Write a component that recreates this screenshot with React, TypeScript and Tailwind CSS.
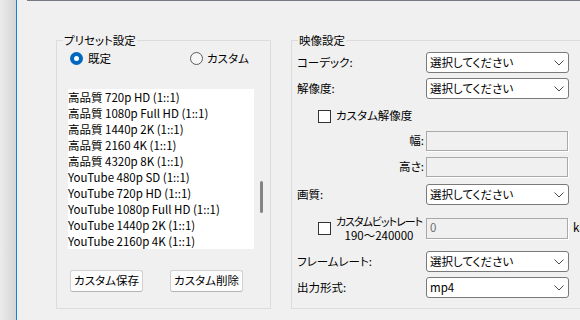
const presets = [
  "高品質 720p HD (1::1)",
  "高品質 1080p Full HD (1::1)",
  "高品質 1440p 2K (1::1)",
  "高品質 2160 4K (1::1)",
  "高品質 4320p 8K (1::1)",
  "YouTube 480p SD (1::1)",
  "YouTube 720p HD (1::1)",
  "YouTube 1080p Full HD (1::1)",
  "YouTube 1440p 2K (1::1)",
  "YouTube 2160p 4K (1::1)",
];

function Chevron() {
  return (
    <svg width="10" height="6" viewBox="0 0 10 6" className="mr-[4px] shrink-0">
      <polyline points="0.5,0.5 5,5 9.5,0.5" fill="none" stroke="#4a4a4a" strokeWidth="1" />
    </svg>
  );
}

function Select({ value }: { value: string }) {
  return (
    <div className="flex h-[21px] w-[143px] items-center justify-between rounded-[3px] border border-[#7a7a7a] bg-white pl-[3px]">
      <span>{value}</span>
      <Chevron />
    </div>
  );
}

function Checkbox() {
  return <div className="size-[13px] shrink-0 border border-[#333333] bg-white" />;
}

function Radio({ checked }: { checked?: boolean }) {
  if (checked) {
    return (
      <div className="flex size-[13px] items-center justify-center rounded-full bg-[#0067c0]">
        <div className="size-[5px] rounded-full bg-white" />
      </div>
    );
  }
  return <div className="size-[13px] rounded-full border border-[#5c5c5c] bg-[#f6f6f6]" />;
}

function Group({ title, className, children }: { title: string; className: string; children: React.ReactNode }) {
  return (
    <div className={"relative shrink-0 border border-[#dcdcdc] " + className}>
      <span className="absolute left-[6px] top-[-9px] bg-[#f0f0f0] px-px leading-[16px]">{title}</span>
      {children}
    </div>
  );
}

function Row({ label, value, className }: { label: string; value: string; className: string }) {
  return (
    <div className={"flex h-[21px] items-center " + className}>
      <span className="w-[134px] pl-[5px]">{label}</span>
      <Select value={value} />
    </div>
  );
}

function SizeRow({ label, className }: { label: string; className: string }) {
  return (
    <div className={"flex h-[20px] items-center " + className}>
      <span className="w-[134px] pr-[2px] text-right">{label}</span>
      <div className="h-[20px] w-[142px] border border-[#a9a9a9] bg-[#f0f0f0] shadow-[1px_1px_0_#ffffff]" />
    </div>
  );
}

export default function App() {
  return (
    <div className="flex h-[320px] w-[580px] overflow-hidden bg-[#f0f0f0] text-[11.5px] text-black [font-family:'Noto_Sans_CJK_JP',sans-serif] [font-feature-settings:'palt']">
      <div className="w-[16px] shrink-0 bg-gradient-to-r from-[#ececec] to-[#d5d5d5]" />
      <div className="w-px shrink-0 bg-[#1a7fd4]" />
      <div className="flex min-w-0 flex-1 flex-col">
        <div className="ml-[10px] h-px shrink-0 bg-[#767b83]" />
        <div className="mt-[39px] flex gap-[20px] pl-[39px]">
          <Group title="プリセット設定" className="w-[215px] pb-[11px]">
            <div className="ml-[13px] mt-[11px] flex h-[13px] items-center">
              <Radio checked />
              <span className="ml-[5px] w-[102px]">既定</span>
              <Radio />
              <span className="ml-[4px]">カスタム</span>
            </div>
            <div className="ml-[11px] mt-[24px] flex">
              <div className="h-[160px] w-[186px] bg-white">
                {presets.map((p) => (
                  <div key={p} className="h-[16px] whitespace-nowrap leading-[16px]">{p}</div>
                ))}
              </div>
              <div className="w-[13px] pl-[6px] pt-[92px]">
                <div className="h-[32px] w-[2.5px] rounded-full bg-[#858585]" />
              </div>
            </div>
            <div className="ml-[13px] mt-[21px] flex gap-[27px]">
              <button className="h-[22px] w-[73px] rounded-[3px] border border-[#d0d0d0] border-b-[#b5b5b5] bg-[#fdfdfd]">カスタム保存</button>
              <button className="h-[22px] w-[73px] rounded-[3px] border border-[#d0d0d0] border-b-[#b5b5b5] bg-[#fdfdfd]">カスタム削除</button>
            </div>
          </Group>
          <Group title="映像設定" className="w-[320px] pb-[10px] pt-[11px]">
            <Row label="コーデック:" value="選択してください" className="" />
            <Row label="解像度:" value="選択してください" className="mt-[5px]" />
            <div className="ml-[26px] mt-[7px] flex h-[20px] items-center">
              <Checkbox />
              <span className="ml-[5px]">カスタム解像度</span>
            </div>
            <SizeRow label="幅:" className="mt-[5px]" />
            <SizeRow label="高さ:" className="mt-[6px]" />
            <Row label="画質:" value="選択してください" className="mt-[7px]" />
            <div className="mt-[8px] flex h-[30px] items-center">
              <div className="ml-[26px]">
                <Checkbox />
              </div>
              <div className="ml-[5px] flex w-[86px] flex-col items-center whitespace-nowrap leading-[14px]">
                <div className="text-[11px] tracking-[-1px]">カスタムビットレート</div>
                <div>190〜240000</div>
              </div>
              <div className="ml-[4px] flex h-[21px] w-[142px] items-center border border-[#a9a9a9] bg-[#f0f0f0] pl-[3px] text-[#6d6d6d] shadow-[1px_1px_0_#ffffff]">0</div>
              <span className="ml-[5px]">kbps</span>
            </div>
            <Row label="フレームレート:" value="選択してください" className="mt-[8px]" />
            <Row label="出力形式:" value="mp4" className="mt-[5px]" />
          </Group>
        </div>
      </div>
    </div>
  );
}
